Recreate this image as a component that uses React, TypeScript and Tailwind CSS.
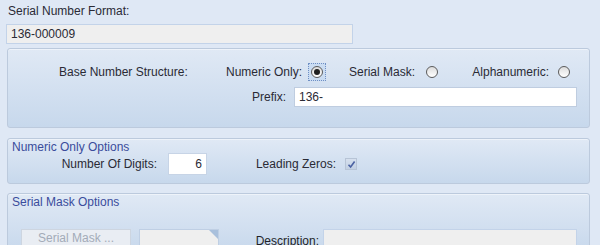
import React from "react";

const Radio = ({ checked = false }: { checked?: boolean }) => (
  <span className="relative flex items-center justify-center w-[12px] h-[12px]">
    {checked && <span className="absolute -inset-[3px] border border-dotted border-[#6f8fc4] bg-[#cadcf2]" />}
    <span className="relative flex items-center justify-center w-[12px] h-[12px] rounded-full border border-[#5b5b5b] bg-gradient-to-b from-[#dcdcdc] to-white">
      {checked && <span className="w-[6px] h-[6px] rounded-full bg-[#1f1f1f]" />}
    </span>
  </span>
);

const Panel = ({ className, children }: { className?: string; children: React.ReactNode }) => (
  <div className={`ml-[7px] w-[583px] rounded-[3px] border border-[#bccadd] bg-gradient-to-b from-[#e0e9f5] to-[#c7d8ec] shadow-[inset_0_1px_0_#eef3fa] ${className ?? ""}`}>
    {children}
  </div>
);

export default function App() {
  return (
    <div className="w-[600px] h-[245px] overflow-hidden bg-[#dfe8f5] text-[12px] text-[#2a2a35] font-['Liberation_Sans',Arial,sans-serif]">
      <div className="h-[24px] pl-[8px] pt-[4px] leading-[14px]">Serial Number Format:</div>
      <div className="ml-[6px] w-[347px] h-[20px] border border-[#c3d3e9] bg-[#efefef] pl-[4px] leading-[18px]">136-000009</div>

      <Panel className="mt-[4px] h-[80px]">
        <div className="flex items-center h-[14px] mt-[16px]">
          <span className="ml-[51px] w-[130px] whitespace-nowrap">Base Number Structure:</span>
          <span className="w-[113px] text-right">Numeric Only:</span>
          <span className="ml-[9px]"><Radio checked /></span>
          <span className="w-[92px] text-right">Serial Mask:</span>
          <span className="ml-[11px]"><Radio /></span>
          <span className="w-[111px] text-right">Alphanumeric:</span>
          <span className="ml-[9px]"><Radio /></span>
        </div>
        <div className="flex items-center mt-[8px] h-[20px]">
          <span className="w-[278px] text-right">Prefix:</span>
          <div className="ml-[8px] w-[283px] h-[20px] border border-[#bfcde0] bg-white pl-[4px] leading-[18px]">136-</div>
        </div>
      </Panel>

      <Panel className="mt-[10px] h-[46px]">
        <div className="h-[14px] pl-[4px] pt-[1px] leading-[14px] text-[#3a4c9c]">Numeric Only Options</div>
        <div className="flex items-center h-[22px]">
          <span className="w-[149px] text-right">Number Of Digits:</span>
          <div className="ml-[11px] w-[39px] h-[22px] border border-[#c7d4e6] bg-white pr-[4px] text-right leading-[20px]">6</div>
          <span className="w-[129px] text-right">Leading Zeros:</span>
          <span className="ml-[9px] flex items-center justify-center w-[12px] h-[12px] border border-[#b7c4d6] bg-gradient-to-b from-[#d6e0ee] to-[#c2d0e3]">
            <svg width="9" height="9" viewBox="0 0 9 9">
              <path d="M1.5 4.8 L3.6 7 L7.6 1.5" fill="none" stroke="#4b62a3" strokeWidth="1.6" />
            </svg>
          </span>
        </div>
      </Panel>

      <Panel className="mt-[9px] h-[60px]">
        <div className="h-[14px] pl-[4px] pt-[1px] leading-[14px] text-[#3a4c9c]">Serial Mask Options</div>
        <div className="flex items-start mt-[21px]">
          <div className="ml-[13px] w-[110px] h-[22px] border border-[#cdd5e0] bg-[#e9edf3] text-center leading-[16px] text-[#a3abb8]">Serial Mask ...</div>
          <div className="relative ml-[8px] w-[80px] h-[22px] border border-[#bfcfe4] bg-[#efefef] overflow-hidden">
            <span className="absolute right-0 top-0 w-0 h-0 border-l-[9px] border-l-transparent border-t-[9px] border-t-[#a9c0dc]" />
          </div>
          <span className="w-[100px] mt-[3px] text-right text-[#1f1f28]">Description:</span>
          <div className="ml-[4px] w-[254px] h-[22px] border border-[#c3d3e9] bg-[#efefef]" />
        </div>
      </Panel>
    </div>
  );
}
